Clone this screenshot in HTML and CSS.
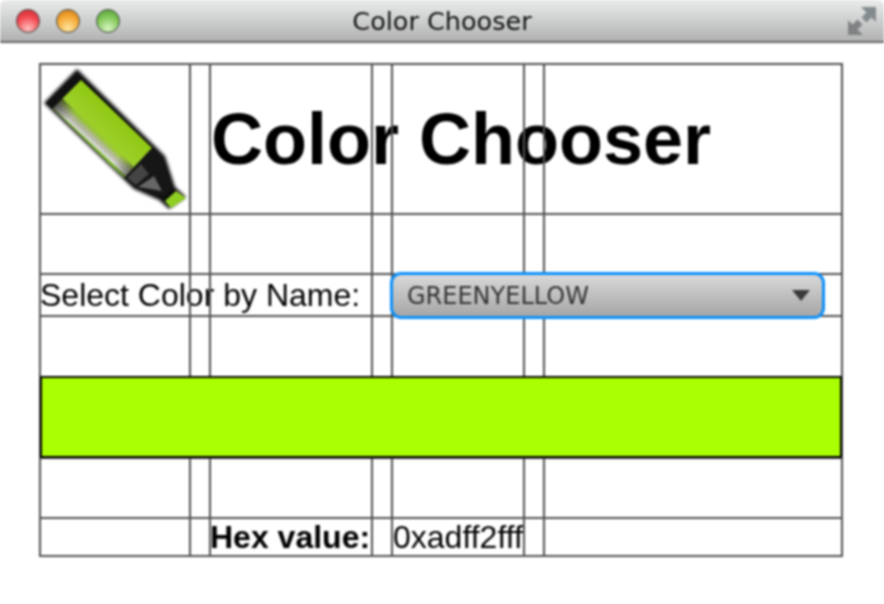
FILE: index.html
```html
<!DOCTYPE html>
<html lang="en">

<head>
  <meta charset="UTF-8">
  <title>Color Chooser</title>
  <link rel="stylesheet" href="styles.css">
</head>

<body>
  <header class="titlebar">
    <div class="traffic-lights">
      <span class="light light-close"></span>
      <span class="light light-min"></span>
      <span class="light light-zoom"></span>
    </div>
    <div class="window-title">Color Chooser</div>
    <svg class="fullscreen-icon" width="28" height="28" viewBox="0 0 28 28">
      <path d="M13 0h15v15l-4.500-4.500-5 5-5-5 5-5z" fill="#848b8f" />
      <path d="M15 28H0V13l4.500 4.500 5-5 5 5-5 5z" fill="#7f8284" />
    </svg>
  </header>

  <main class="chooser">
    <div class="line-v col-1"></div>
    <div class="line-v col-2"></div>
    <div class="line-v col-3"></div>
    <div class="line-v col-4"></div>
    <div class="line-v col-5"></div>
    <div class="line-v col-6"></div>
    <div class="line-h row-2"></div>
    <div class="line-h row-3"></div>
    <div class="line-h row-4"></div>
    <div class="line-h row-5"></div>
    <div class="line-h row-6"></div>
    <div class="line-h row-7"></div>
    <div class="frame"></div>

    <svg class="marker" width="150" height="150" viewBox="40 65 150 150">
      <defs>
        <linearGradient id="body-fill" gradientUnits="userSpaceOnUse" x1="116" y1="113" x2="88" y2="143">
          <stop offset="0" stop-color="#8fc812" />
          <stop offset="0.68" stop-color="#9ed02c" />
          <stop offset="0.78" stop-color="#b4c08e" />
          <stop offset="0.87" stop-color="#c8cabf" />
          <stop offset="0.94" stop-color="#f0f0ea" />
          <stop offset="0.96" stop-color="#7fc02a" />
          <stop offset="1" stop-color="#7fc02a" />
        </linearGradient>
        <linearGradient id="body-shade" gradientUnits="userSpaceOnUse" x1="56" y1="104" x2="130" y2="174">
          <stop offset="0" stop-color="#222" stop-opacity="0.75" />
          <stop offset="0.2" stop-color="#666" stop-opacity="0.15" />
          <stop offset="0.8" stop-color="#666" stop-opacity="0.05" />
          <stop offset="1" stop-color="#333" stop-opacity="0.65" />
        </linearGradient>
        <filter id="soft" x="-10%" y="-10%" width="120%" height="120%">
          <feGaussianBlur stdDeviation="1.500" />
        </filter>
      </defs>
      <polygon points="44,103 77,69 165,156 175,187 186,197 169,209 159,200 134,189" fill="#111" filter="url(#soft)" />
      <polygon points="52,108 80,79 152,148 124,178" fill="url(#body-fill)" />
      <polygon points="52,108 62,98 134,167 124,178" fill="url(#body-shade)" />
      <polygon points="46,103 76,73 82,79 52,109" fill="#111" />
      <polygon points="124,178 152,148 162,158 172,190 164,197 135,187" fill="#161616" />
      <polygon points="127,178 141,164 149,174 136,185" fill="#444" />
      <polygon points="138,187 154,176 162,191" fill="#666" />
      <polygon points="176,191 186,198 171,208 165,201" fill="#8fcf22" />
    </svg>
    <h1 class="heading">Color Chooser</h1>

    <label class="name-label">Select Color by Name:</label>
    <div class="name-select">
      <span>GREENYELLOW</span>
      <svg width="18" height="11" viewBox="0 0 18 11">
        <path d="M0 0h18l-9 11z" fill="#3a3a3a" />
      </svg>
    </div>

    <div class="swatch"></div>

    <strong class="hex-label">Hex value:</strong>
    <span class="hex-value">0xadff2fff</span>
  </main>
</body>

</html>
```

FILE: styles.css
```css
html,
body {
  margin: 0;
  height: 604px;
  overflow: hidden;
  background-color: #fff;
  font-family: 'Liberation Sans', Arial, sans-serif;
}

.titlebar {
  height: 41px;
  display: grid;
  grid-template-columns: 1fr auto 1fr;
  align-items: center;
  padding: 0 8px 0 16px;
  background: linear-gradient(#e9e9e9, #d6d8d8 35%, #b1b1b1);
  border-bottom: 2px solid #666;
  border-radius: 6px 6px 0 0;
  filter: blur(0.8px);
}

.traffic-lights {
  display: flex;
  gap: 16px;
}

.light {
  width: 22px;
  height: 22px;
  border-radius: 50%;
  border: 1px solid #444;
}

.light-close {
  background: radial-gradient(circle at 50% 85%, #ffc0c0, #f24a50 55%, #c8262c);
}

.light-min {
  background: radial-gradient(circle at 50% 85%, #ffe6a0, #f5a834 55%, #c87a14);
}

.light-zoom {
  background: radial-gradient(circle at 50% 85%, #d8f5c0, #82c85a 55%, #4e9a32);
}

.window-title {
  font-family: 'DejaVu Sans', sans-serif;
  font-size: 25.500px;
  color: #111;
  margin-right: 8px;
}

.fullscreen-icon {
  justify-self: end;
}

.chooser {
  display: grid;
  grid-template-columns: 150px 20px 162px 20px 132px 20px 300px;
  grid-template-rows: 150px 60px 42px 61px 81px 60px 40px;
  width: 804px;
  margin: 20px 0 0 39px;
  filter: blur(0.8px);
}

.line-v,
.line-h,
.frame {
  z-index: 1;
}

.line-v {
  grid-row: 1 / -1;
  border-left: 2px solid #505050;
}

.line-h {
  grid-column: 1 / -1;
  border-top: 2px solid #505050;
}

.col-1 { grid-column: 2; }
.col-2 { grid-column: 3; }
.col-3 { grid-column: 4; }
.col-4 { grid-column: 5; }
.col-5 { grid-column: 6; }
.col-6 { grid-column: 7; }

.row-2 { grid-row: 2; }
.row-3 { grid-row: 3; }
.row-4 { grid-row: 4; }
.row-5 { grid-row: 5; }
.row-6 { grid-row: 6; }
.row-7 { grid-row: 7; }

.frame {
  grid-row: 1 / -1;
  grid-column: 1 / -1;
  border: 2px solid #505050;
}

.marker {
  grid-row: 1;
  grid-column: 1;
  margin-left: 1px;
  margin-top: 2px;
}

.heading {
  grid-row: 1;
  grid-column: 3 / -1;
  align-self: center;
  margin: 0;
  padding: 1px 0 0 2px;
  font-size: 72px;
  font-weight: bold;
  color: #000;
}

.name-label {
  grid-row: 3;
  grid-column: 1 / 4;
  align-self: center;
  padding: 2px 0 0 1px;
  font-size: 32px;
  color: #000;
  white-space: nowrap;
}

.name-select {
  grid-row: 3;
  grid-column: 5 / -1;
  z-index: 2;
  justify-self: start;
  align-self: center;
  display: flex;
  align-items: center;
  justify-content: space-between;
  box-sizing: border-box;
  width: 435px;
  height: 47px;
  margin: 3px 0 0 -1px;
  padding: 0 12px 0 14px;
  border: 3px solid #0b8ffa;
  border-radius: 11px;
  background: linear-gradient(#d8d8d8, #c2c2c2 45%, #a6a6a6);
  font-family: 'DejaVu Sans', sans-serif;
  font-size: 24px;
  color: #333;
}

.swatch {
  grid-row: 5;
  grid-column: 1 / -1;
  z-index: 2;
  margin: 0 1px -1px 1px;
  background-color: #aaff00;
  border: 2px solid #000;
}

.hex-label {
  grid-row: 7;
  grid-column: 3 / 5;
  align-self: center;
  padding-left: 1px;
  font-size: 32px;
  color: #000;
  white-space: nowrap;
}

.hex-value {
  grid-row: 7;
  grid-column: 5 / -1;
  align-self: center;
  padding-left: 2px;
  font-size: 32px;
  color: #000;
}
```
